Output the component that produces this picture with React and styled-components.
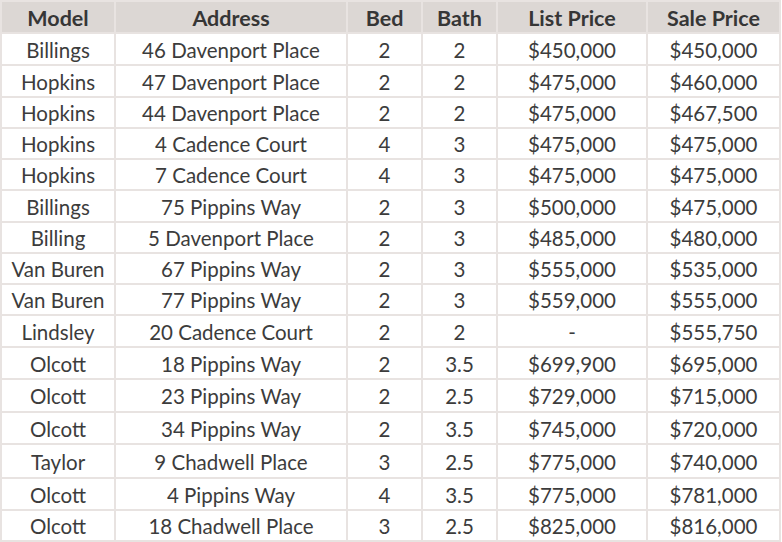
import React from "react";
import styled, { createGlobalStyle } from "styled-components";

const Global = createGlobalStyle`
  html, body { margin: 0; padding: 0; background: #ffffff; }
  body { font-family: "Lato", "Open Sans", sans-serif; }
`;

const COLS = [112, 230, 73, 73, 148, 131];
const ROWS = [30, 30, 30, 29, 29, 29, 30, 29, 29, 29, 30, 30, 31, 30, 32, 30, 29];

const Grid = styled.div`
  display: grid;
  grid-template-columns: ${COLS.map((c) => c + "px").join(" ")};
  grid-template-rows: ${ROWS.map((r) => r + "px").join(" ")};
  gap: 2px;
  padding: 2px;
  width: max-content;
  background: #e8e3e1;
`;

const Cell = styled.div`
  display: flex;
  align-items: center;
  justify-content: center;
  background: ${(p) => (p.$head ? "#dcd7d4" : "#ffffff")};
  color: ${(p) => (p.$head ? "#363636" : "#3c3c3c")};
  font-size: ${(p) => (p.$head ? "21.5px" : "20.5px")};
  font-weight: ${(p) => (p.$head ? 700 : 400)};
  white-space: nowrap;
  padding-top: 1px;
`;

const head = ["Model", "Address", "Bed", "Bath", "List Price", "Sale Price"];
const data = [
  ["Billings", "46 Davenport Place", "2", "2", "$450,000", "$450,000"],
  ["Hopkins", "47 Davenport Place", "2", "2", "$475,000", "$460,000"],
  ["Hopkins", "44 Davenport Place", "2", "2", "$475,000", "$467,500"],
  ["Hopkins", "4 Cadence Court", "4", "3", "$475,000", "$475,000"],
  ["Hopkins", "7 Cadence Court", "4", "3", "$475,000", "$475,000"],
  ["Billings", "75 Pippins Way", "2", "3", "$500,000", "$475,000"],
  ["Billing", "5 Davenport Place", "2", "3", "$485,000", "$480,000"],
  ["Van Buren", "67 Pippins Way", "2", "3", "$555,000", "$535,000"],
  ["Van Buren", "77 Pippins Way", "2", "3", "$559,000", "$555,000"],
  ["Lindsley", "20 Cadence Court", "2", "2", "-", "$555,750"],
  ["Olcott", "18 Pippins Way", "2", "3.5", "$699,900", "$695,000"],
  ["Olcott", "23 Pippins Way", "2", "2.5", "$729,000", "$715,000"],
  ["Olcott", "34 Pippins Way", "2", "3.5", "$745,000", "$720,000"],
  ["Taylor", "9 Chadwell Place", "3", "2.5", "$775,000", "$740,000"],
  ["Olcott", "4 Pippins Way", "4", "3.5", "$775,000", "$781,000"],
  ["Olcott", "18 Chadwell Place", "3", "2.5", "$825,000", "$816,000"],
];

export default function App() {
  return (
    <>
      <Global />
      <Grid>
        {head.map((h) => (
          <Cell key={h} $head>
            {h}
          </Cell>
        ))}
        {data.map((row, i) =>
          row.map((v, j) => <Cell key={i + "-" + j}>{v}</Cell>)
        )}
      </Grid>
    </>
  );
}
